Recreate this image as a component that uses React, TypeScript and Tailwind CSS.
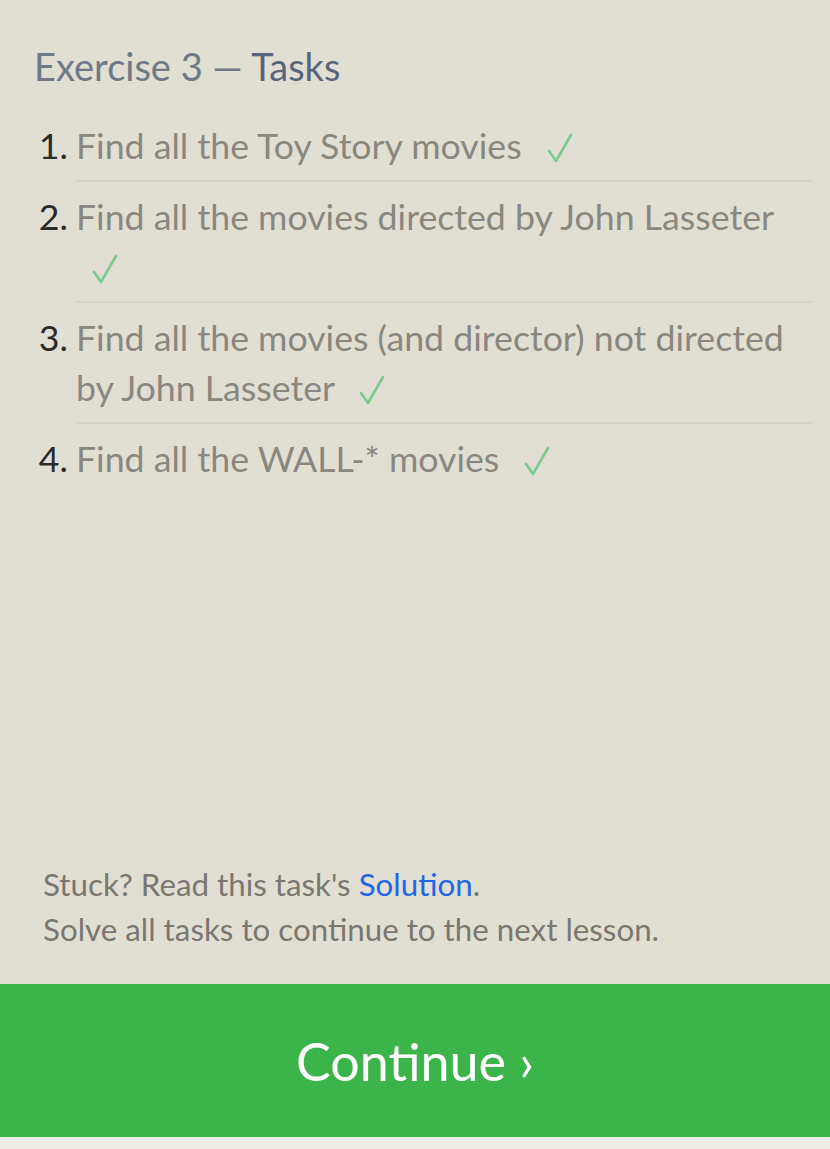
import React from "react";

type Task = { id: number; text: string };

const tasks: Task[] = [
  { id: 1, text: "Find all the Toy Story movies" },
  { id: 2, text: "Find all the movies directed by John Lasseter" },
  { id: 3, text: "Find all the movies (and director) not directed by John Lasseter" },
  { id: 4, text: "Find all the WALL-* movies" },
];

function Check() {
  return (
    <svg
      viewBox="0 0 26 30"
      className="inline-block w-[26px] h-[30px] ml-[16px] align-[-4px]"
      fill="none"
      stroke="#7ccb88"
      strokeWidth="2.6"
      strokeLinecap="round"
      strokeLinejoin="round"
    >
      <path d="M2 18 L9 28 L24 2" />
    </svg>
  );
}

export default function App() {
  return (
    <div className="min-h-screen flex flex-col bg-[#e1dfd4] font-['Lato','Open_Sans',sans-serif]">
      <div className="flex-1 pl-[34px] pr-[17px] pt-[41px]">
        <h2 className="text-[38px] leading-[50px] text-[#6f7986]">
          Exercise 3 — <span className="text-[#58647a]">Tasks</span>
        </h2>

        <ol className="mt-5">
          {tasks.map((t, i) => (
            <li key={t.id} className="flex text-[35.7px] leading-[50px]">
              <span className="w-[42px] shrink-0 pt-[10px] pr-[8px] text-right text-[#2b2a28]">
                {t.id}.
              </span>
              <div
                className={
                  "flex-1 pt-[10px] pb-[9px] text-[#8a8780] " +
                  (i < tasks.length - 1 ? "border-b-2 border-[#d6d3c8]" : "")
                }
              >
                {t.text} <Check />
              </div>
            </li>
          ))}
        </ol>
      </div>

      <div className="px-[43px] pb-[32px] text-[31.3px] leading-[45px] text-[#7b7670]">
        <p>
          Stuck? Read this task's <a className="text-[#2266e6]">Solution</a>.
        </p>
        <p>Solve all tasks to continue to the next lesson.</p>
      </div>

      <button className="h-[153px] w-full bg-[#3bb54a] text-white text-[52px] leading-none">
        Continue ›
      </button>
      <div className="h-[12px] bg-[#eeece6]" />
    </div>
  );
}
